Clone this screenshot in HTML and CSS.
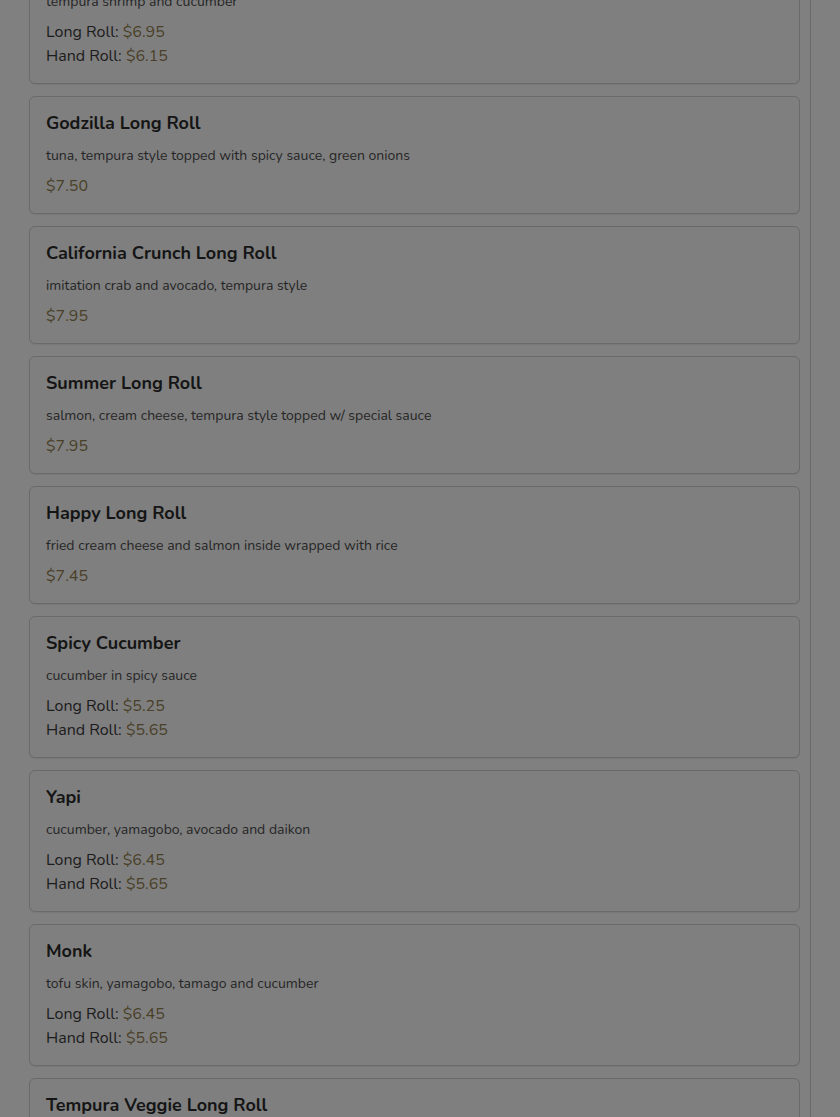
FILE: index.html
```html
<!DOCTYPE html>
<html lang="en">
<head>
<meta charset="utf-8">
<title>Menu</title>
<link rel="stylesheet" href="styles.css">
</head>
<body>
<div class="panel">
  <div class="list">
    <div class="card">
      <h3 class="name">Shrimp Tempura Long Roll</h3>
      <p class="desc">tempura shrimp and cucumber</p>
      <div class="price"><span class="label">Long Roll: </span>$6.95</div>
      <div class="price"><span class="label">Hand Roll: </span>$6.15</div>
    </div>
    <div class="card">
      <h3 class="name">Godzilla Long Roll</h3>
      <p class="desc">tuna, tempura style topped with spicy sauce, green onions</p>
      <div class="price">$7.50</div>
    </div>
    <div class="card">
      <h3 class="name">California Crunch Long Roll</h3>
      <p class="desc">imitation crab and avocado, tempura style</p>
      <div class="price">$7.95</div>
    </div>
    <div class="card">
      <h3 class="name">Summer Long Roll</h3>
      <p class="desc">salmon, cream cheese, tempura style topped w/ special sauce</p>
      <div class="price">$7.95</div>
    </div>
    <div class="card">
      <h3 class="name">Happy Long Roll</h3>
      <p class="desc">fried cream cheese and salmon inside wrapped with rice</p>
      <div class="price">$7.45</div>
    </div>
    <div class="card">
      <h3 class="name">Spicy Cucumber</h3>
      <p class="desc">cucumber in spicy sauce</p>
      <div class="price"><span class="label">Long Roll: </span>$5.25</div>
      <div class="price"><span class="label">Hand Roll: </span>$5.65</div>
    </div>
    <div class="card">
      <h3 class="name">Yapi</h3>
      <p class="desc">cucumber, yamagobo, avocado and daikon</p>
      <div class="price"><span class="label">Long Roll: </span>$6.45</div>
      <div class="price"><span class="label">Hand Roll: </span>$5.65</div>
    </div>
    <div class="card">
      <h3 class="name">Monk</h3>
      <p class="desc">tofu skin, yamagobo, tamago and cucumber</p>
      <div class="price"><span class="label">Long Roll: </span>$6.45</div>
      <div class="price"><span class="label">Hand Roll: </span>$5.65</div>
    </div>
    <div class="card">
      <h3 class="name">Tempura Veggie Long Roll</h3>
      <p class="desc">tempura vegetables and avocado</p>
      <div class="price">$7.25</div>
    </div>
  </div>
</div>
</body>
</html>
```
FILE: styles.css
```css
html, body {
  margin: 0;
  padding: 0;
  height: 100%;
  overflow: hidden;
  background: #808080;
  font-family: "Nunito", "Lato", "Noto Sans", sans-serif;
}

.panel {
  width: 811px;
  height: 100%;
  box-sizing: border-box;
  border-right: 1px solid #696969;
  overflow: hidden;
}

.list {
  margin-top: -58px;
  padding: 0 10px 0 29px;
  display: flex;
  flex-direction: column;
  gap: 12px;
}

.card {
  border: 1px solid #6a6a6a;
  border-radius: 6px;
  background: #7f7f7f;
  padding: 15px 16px 15px 16px;
  box-shadow: 0 1px 1px rgba(0, 0, 0, 0.06);
}

.name {
  margin: 0 0 12px 0;
  font-size: 18px;
  line-height: 22px;
  font-weight: 700;
  color: #151515;
}

.desc {
  margin: 0 0 8px 0;
  font-size: 14px;
  line-height: 20px;
  color: #262626;
}

.price {
  font-size: 16px;
  line-height: 24px;
  color: #4a3f28;
}

.label {
  color: #1c1c1c;
}
```
